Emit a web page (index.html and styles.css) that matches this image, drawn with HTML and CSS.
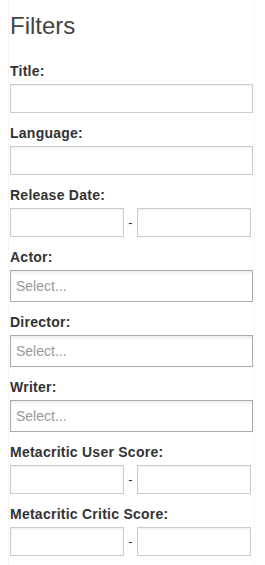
FILE: index.html
```html
<!DOCTYPE html>
<html lang="en">
<head>
  <meta charset="UTF-8" />
  <title>Filters</title>
  <meta name="viewport" content="width=device-width, initial-scale=1.0" />
  <link rel="stylesheet" href="styles.css">
</head>
<body>

  <div class="sidebar">
    <h2 class="sidebar-title">Filters</h2>

    <form class="filters">
      <div class="filter-group">
        <label class="filter-label" for="f-title">Title:</label>
        <input class="text-field" id="f-title" type="text" />
      </div>

      <div class="filter-group">
        <label class="filter-label" for="f-lang">Language:</label>
        <input class="text-field" id="f-lang" type="text" />
      </div>

      <div class="filter-group">
        <label class="filter-label">Release Date:</label>
        <div class="range">
          <input class="text-field range-field" type="text" />
          <span class="range-dash">-</span>
          <input class="text-field range-field" type="text" />
        </div>
      </div>

      <div class="filter-group">
        <label class="filter-label">Actor:</label>
        <div class="choices"><span class="choices-placeholder">Select...</span></div>
      </div>

      <div class="filter-group">
        <label class="filter-label">Director:</label>
        <div class="choices"><span class="choices-placeholder">Select...</span></div>
      </div>

      <div class="filter-group">
        <label class="filter-label">Writer:</label>
        <div class="choices"><span class="choices-placeholder">Select...</span></div>
      </div>

      <div class="filter-group">
        <label class="filter-label">Metacritic User Score:</label>
        <div class="range">
          <input class="text-field range-field" type="text" />
          <span class="range-dash">-</span>
          <input class="text-field range-field" type="text" />
        </div>
      </div>

      <div class="filter-group">
        <label class="filter-label">Metacritic Critic Score:</label>
        <div class="range">
          <input class="text-field range-field" type="text" />
          <span class="range-dash">-</span>
          <input class="text-field range-field" type="text" />
        </div>
      </div>
    </form>
  </div>

</body>
</html>
```

FILE: styles.css
```css
* { box-sizing: border-box; }
body {
  margin: 0;
  background: #fff;
  color: #333;
  font-family: "Liberation Sans", Arial, sans-serif;
  font-size: 14px;
}
.sidebar {
  margin-left: 8px;
  width: 247px;
  min-height: 100vh;
  padding: 13px 1px 0;
  border-left: 1px solid #f7f7f7;
  border-right: 1px solid #f7f7f7;
}
.sidebar-title {
  margin: 0 0 23px;
  font-size: 24px;
  font-weight: normal;
  line-height: 1.1;
  color: #444;
}
.filter-group {
  margin-bottom: 11px;
}
.filter-group:last-child {
  margin-bottom: 0;
}
.filter-label {
  display: block;
  margin-bottom: 4px;
  font-weight: bold;
  line-height: 18px;
  letter-spacing: 0.25px;
  color: #333;
}
.text-field {
  display: block;
  width: 100%;
  height: 29px;
  margin: 0;
  padding: 4px 6px;
  border: 1px solid #ccc;
  border-radius: 0;
  background: #fff;
  box-shadow: inset 0 1px 2px rgba(0,0,0,0.08);
  font: inherit;
  color: #555;
  outline: none;
}
.range {
  display: flex;
  align-items: center;
  gap: 4px;
}
.range-field {
  width: 114px;
  flex: none;
}
.range-dash {
  width: 5px;
  text-align: center;
  font-size: 13px;
  color: #333;
}
.choices {
  display: flex;
  align-items: center;
  height: 32px;
  padding: 0 5px;
  border: 1px solid #aaa;
  background: linear-gradient(#eee 1%, #fff 15%);
}
.choices-placeholder {
  font-size: 14px;
  color: #999;
}
```
